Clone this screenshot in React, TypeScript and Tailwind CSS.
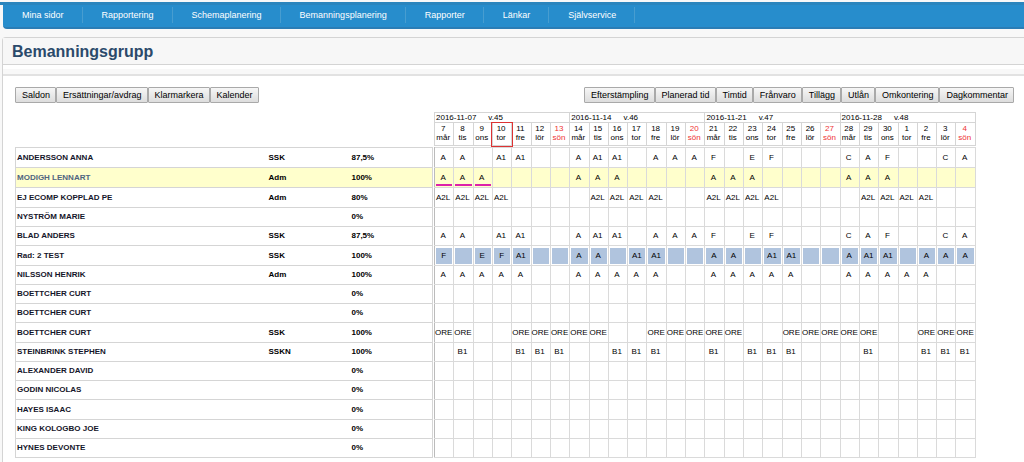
import React from 'react';

interface Day {
  date: number;
  name: string;
}

interface Week {
  start: string;
  label: string;
  days: Day[];
}

interface Employee {
  name: string;
  group: string;
  rate: string;
  shifts: string;
  variant?: 'selected' | 'row';
}

const menu = ['Mina sidor', 'Rapportering', 'Schemaplanering', 'Bemanningsplanering', 'Rapporter', 'Länkar', 'Självservice'];
const leftActions = ['Saldon', 'Ersättningar/avdrag', 'Klarmarkera', 'Kalender'];
const rightActions = ['Efterstämpling', 'Planerad tid', 'Timtid', 'Frånvaro', 'Tillägg', 'Utlån', 'Omkontering', 'Dagkommentar'];

const dayNames = ['mår', 'tis', 'ons', 'tor', 'fre', 'lör', 'sön'];

const makeWeek = (start: string, label: string, dates: number[]): Week => ({
  start,
  label,
  days: dates.map((date, i) => ({ date, name: dayNames[i] })),
});

const weeks: Week[] = [
  makeWeek('2016-11-07', 'v.45', [7, 8, 9, 10, 11, 12, 13]),
  makeWeek('2016-11-14', 'v.46', [14, 15, 16, 17, 18, 19, 20]),
  makeWeek('2016-11-21', 'v.47', [21, 22, 23, 24, 25, 26, 27]),
  makeWeek('2016-11-28', 'v.48', [28, 29, 30, 1, 2, 3, 4]),
];

const TODAY = 3;

// One code per day separated by spaces, "-" is a free day
const employees: Employee[] = [
  { name: 'ANDERSSON ANNA', group: 'SSK', rate: '87,5%', shifts: 'A A - A1 A1 - - A A1 A1 - A A A F - E F - - - C A F - - C A' },
  { name: 'MODIGH LENNART', group: 'Adm', rate: '100%', variant: 'selected', shifts: 'A A A - - - - A A A - - - - A A A - - - - A A A - - - -' },
  { name: 'EJ ECOMP KOPPLAD PE', group: 'Adm', rate: '80%', shifts: 'A2L A2L A2L A2L - - - - A2L A2L A2L A2L - - A2L A2L A2L A2L - - - - A2L A2L A2L A2L - -' },
  { name: 'NYSTRÖM MARIE', group: '', rate: '0%', shifts: '' },
  { name: 'BLAD ANDERS', group: 'SSK', rate: '87,5%', shifts: 'A A - A1 A1 - - A A1 A1 - A A A F - E F - - - C A F - - C A' },
  { name: 'Rad: 2 TEST', group: 'SSK', rate: '100%', variant: 'row', shifts: 'F - E F A1 - - A A - A1 A1 - - A A - A1 A1 - - A A1 A1 - A A A' },
  { name: 'NILSSON HENRIK', group: 'Adm', rate: '100%', shifts: 'A A A A A - - A A A A A - - A A A A A - - A A A A A - -' },
  { name: 'BOETTCHER CURT', group: '', rate: '0%', shifts: '' },
  { name: 'BOETTCHER CURT', group: '', rate: '0%', shifts: '' },
  { name: 'BOETTCHER CURT', group: 'SSK', rate: '100%', shifts: 'ORE ORE - - ORE ORE ORE ORE ORE - - ORE ORE ORE ORE ORE - - ORE ORE ORE ORE ORE - - ORE ORE ORE' },
  { name: 'STEINBRINK STEPHEN', group: 'SSKN', rate: '100%', shifts: '- B1 - - B1 B1 B1 - - B1 B1 B1 - - B1 - B1 B1 B1 - - - B1 - - B1 B1 B1' },
  { name: 'ALEXANDER DAVID', group: '', rate: '0%', shifts: '' },
  { name: 'GODIN NICOLAS', group: '', rate: '0%', shifts: '' },
  { name: 'HAYES ISAAC', group: '', rate: '0%', shifts: '' },
  { name: 'KING KOLOGBO JOE', group: '', rate: '0%', shifts: '' },
  { name: 'HYNES DEVONTE', group: '', rate: '0%', shifts: '' },
];

const ActionButtons: React.FC<{ labels: string[] }> = ({ labels }) => (
  <div className="flex">
    {labels.map((label) => (
      <button
        key={label}
        className="h-4 pl-1.5 pr-[5px] border border-[#a9a9a9] rounded-[1px] bg-linear-to-b from-[#f6f6f6] to-[#dddddd] text-[9px] leading-3 text-black whitespace-nowrap"
      >
        {label}
      </button>
    ))}
  </div>
);

const EmployeeRow: React.FC<{ employee: Employee; tall: boolean }> = ({ employee, tall }) => {
  const codes = employee.shifts.split(' ');
  const selected = employee.variant === 'selected';
  const rowBg = selected ? 'bg-[#ffffcc]' : '';

  return (
    <tr className={tall ? 'h-5' : 'h-[19px]'}>
      <th scope="row" className={`${rowBg} border-y border-l border-[#d5d5d5] pl-px text-left font-bold ${selected ? 'text-[#4f6580]' : 'text-[#15152a]'}`}>
        {employee.name}
      </th>
      <td className={`${rowBg} border-y border-[#d5d5d5] font-bold`}>{employee.group}</td>
      <td className={`${rowBg} border-y border-r border-[#d5d5d5] font-bold`}>{employee.rate}</td>
      <td />
      {weeks.flatMap((week, w) =>
        week.days.map((day, d) => {
          const index = w * 7 + d;
          const code = codes[index] && codes[index] !== '-' ? codes[index] : '';
          return (
            <td key={index} className={`${rowBg} border border-[#dadada] text-center ${d === 0 ? 'border-l-[#bbbbbb]' : ''}`}>
              {employee.variant === 'row' ? (
                <div className="h-4 mx-px pr-px bg-[#b0c4de] leading-4">{code}</div>
              ) : selected && index < 3 ? (
                <div className="h-4 mx-px pr-0.5 border-b-2 border-[#dd22aa] leading-4">{code}</div>
              ) : (
                <div className="pr-0.5 whitespace-nowrap">{code}</div>
              )}
            </td>
          );
        })
      )}
    </tr>
  );
};

const App: React.FC = () => {
  return (
    <div className="min-h-screen bg-[#f8f8f8] pt-0.5 text-black overflow-x-hidden font-['Liberation_Sans',Arial,sans-serif]">
      <div className="border-t-3 border-[#2b85bd]">
        <nav className="ml-[3px] flex h-6 items-center rounded-bl-sm border-b-2 border-[#2b7db5] bg-[#278dcc] pb-0.5">
          {menu.map((item) => (
            <a key={item} href="#" className="pl-[19px] pr-[18px] border-r border-[#479dd0] text-[9px] leading-4 text-white whitespace-nowrap">
              {item}
            </a>
          ))}
        </nav>
      </div>

      <main className="mt-2 ml-0.5 rounded-tl-sm border-t border-l border-[#d4d4d4] bg-white pb-4">
        <header className="border-b border-[#d4d4d4] bg-[#f7f7f7] pt-0.5 pl-[9px]">
          <h1 className="text-base leading-6 font-bold text-[#2b4a6b]">Bemanningsgrupp</h1>
        </header>
        <div className="mt-1 h-[7px] border-b-2 border-[#e2e2e2] bg-[#f8f8f8]" />

        <div className="pl-3 pt-[11px] pr-2.5">
          <div className="flex justify-between">
            <ActionButtons labels={leftActions} />
            <ActionButtons labels={rightActions} />
          </div>

          <div className="mt-[9px] pr-[38px]">
            <table className="w-full table-fixed border-collapse text-[8px] leading-[10px]">
              <colgroup>
                <col className="w-[253px]" />
                <col className="w-[83px]" />
                <col className="w-[81px]" />
                <col className="w-0.5" />
                {weeks.flatMap((week) => week.days.map((day) => <col key={`${week.label}-${day.date}`} />))}
              </colgroup>
              <thead>
                <tr className="h-2.5">
                  <td colSpan={4} />
                  {weeks.map((week) => (
                    <th key={week.label} colSpan={7} scope="colgroup" className="border border-[#d5d5d5] pl-px text-left font-normal leading-[9px]">
                      <span>{week.start}</span>
                      <span className="ml-3">{week.label}</span>
                    </th>
                  ))}
                </tr>
                <tr className="h-[23px] leading-[9px]">
                  <td colSpan={4} />
                  {weeks.flatMap((week, w) =>
                    week.days.map((day, d) => {
                      const today = w === 0 && d === TODAY;
                      return (
                        <th
                          key={`${w}-${d}`}
                          scope="col"
                          className={`border border-[#d5d5d5] pr-0.5 pb-0.5 font-normal ${today ? 'outline outline-[#dd3333]' : ''} ${d === 6 ? 'text-[#ee3333]' : ''}`}
                        >
                          {day.date}
                          <br />
                          {day.name}
                        </th>
                      );
                    })
                  )}
                </tr>
                <tr className="h-0.5">
                  <td colSpan={32} />
                </tr>
              </thead>
              <tbody>
                {employees.map((employee, i) => (
                  <EmployeeRow key={i} employee={employee} tall={i < 3 || i % 4 === 1} />
                ))}
              </tbody>
            </table>
          </div>
        </div>
      </main>
    </div>
  );
};

export default App;
